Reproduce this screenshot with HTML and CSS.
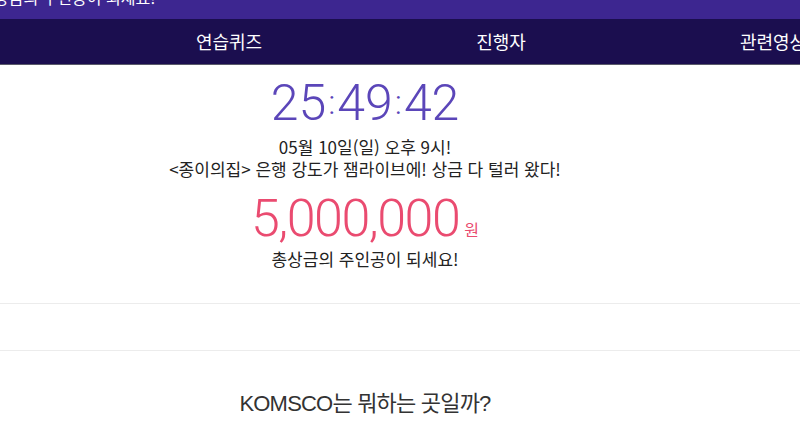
FILE: index.html
```html
<!DOCTYPE html>
<html lang="ko">
<head>
<meta charset="utf-8">
<title>잼라이브 KOMSCO 퀴즈</title>
<link rel="stylesheet" href="styles.css">
</head>
<body>
<div class="page">
  <div class="banner"><p class="banner-text">상금의 주인공이 되세요!</p></div>
  <nav class="nav">
    <div class="nav-inner">
      <a class="nav-item">퀴즈안내</a>
      <a class="nav-item">연습퀴즈</a>
      <a class="nav-item">진행자</a>
      <a class="nav-item">관련영상</a>
    </div>
  </nav>
  <section class="hero">
    <div class="timer">25<span class="colon">:</span>49<span class="colon">:</span>42</div>
    <p class="desc">05월 10일(일) 오후 9시!<br>&lt;종이의집&gt; 은행 강도가 잼라이브에! 상금 다 털러 왔다!</p>
    <div class="prize"><span class="amount">5,000,000</span><span class="won">원</span></div>
    <p class="desc prize-desc">총상금의 주인공이 되세요!</p>
  </section>
  <div class="divider-band"></div>
  <section class="about">
    <h2 class="about-title">KOMSCO는 뭐하는 곳일까?</h2>
  </section>
</div>
</body>
</html>
```

FILE: styles.css
```css
html, body {
  margin: 0;
  padding: 0;
  background: #fff;
  overflow: hidden;
}
body {
  font-family: "Noto Sans CJK KR", "Noto Sans", sans-serif;
  color: #222;
}
.page {
  width: 800px;
}
.banner {
  height: 19px;
  background: #3d2690;
  overflow: hidden;
}
.banner-text {
  margin: -13px 0 0 -6px;
  color: #fff;
  font-size: 16px;
  line-height: 20px;
}
.nav {
  height: 45px;
  background: #1b0e4f;
  border-bottom: 1px solid #5a5a6a;
  overflow: hidden;
}
.nav-inner {
  width: 730px;
  display: flex;
  justify-content: center;
}
.nav-item {
  flex: 0 0 272px;
  text-align: center;
  color: #fff;
  font-size: 18px;
  line-height: 45px;
}
.hero {
  width: 800px;
  padding: 10px 70px 0 0;
  height: 239px;
  box-sizing: border-box;
  display: flex;
  flex-direction: column;
  align-items: center;
  border-bottom: 1px solid #ececec;
}
.timer {
  font-family: "Roboto", "Open Sans", sans-serif;
  font-weight: 300;
  font-size: 50px;
  line-height: 54px;
  color: #5b46b9;
}
.colon {
  display: inline-block;
  font-size: 34px;
  vertical-align: 6px;
  margin: 0 2px;
}
.desc {
  margin: 6px 0 0;
  font-size: 17px;
  line-height: 22px;
  text-align: center;
  color: #222;
  letter-spacing: 0;
}
.prize {
  margin-top: 12px;
  display: flex;
  align-items: baseline;
  color: #ea4b70;
}
.amount {
  font-family: "Roboto", "Open Sans", sans-serif;
  font-weight: 300;
  font-size: 52px;
  line-height: 54px;
  letter-spacing: -1.5px;
}
.won {
  font-size: 16px;
  margin-left: 5px;
}
.prize-desc {
  margin-top: 2px;
}
.divider-band {
  height: 46px;
  border-bottom: 1px solid #ececec;
  width: 800px;
}
.about {
  width: 730px;
  display: flex;
  justify-content: center;
  padding-top: 38px;
}
.about-title {
  margin: 0;
  font-family: "Liberation Sans", "Noto Sans CJK KR", sans-serif;
  font-weight: 400;
  font-size: 22px;
  line-height: 30px;
  color: #333;
  letter-spacing: -0.8px;
}
```
